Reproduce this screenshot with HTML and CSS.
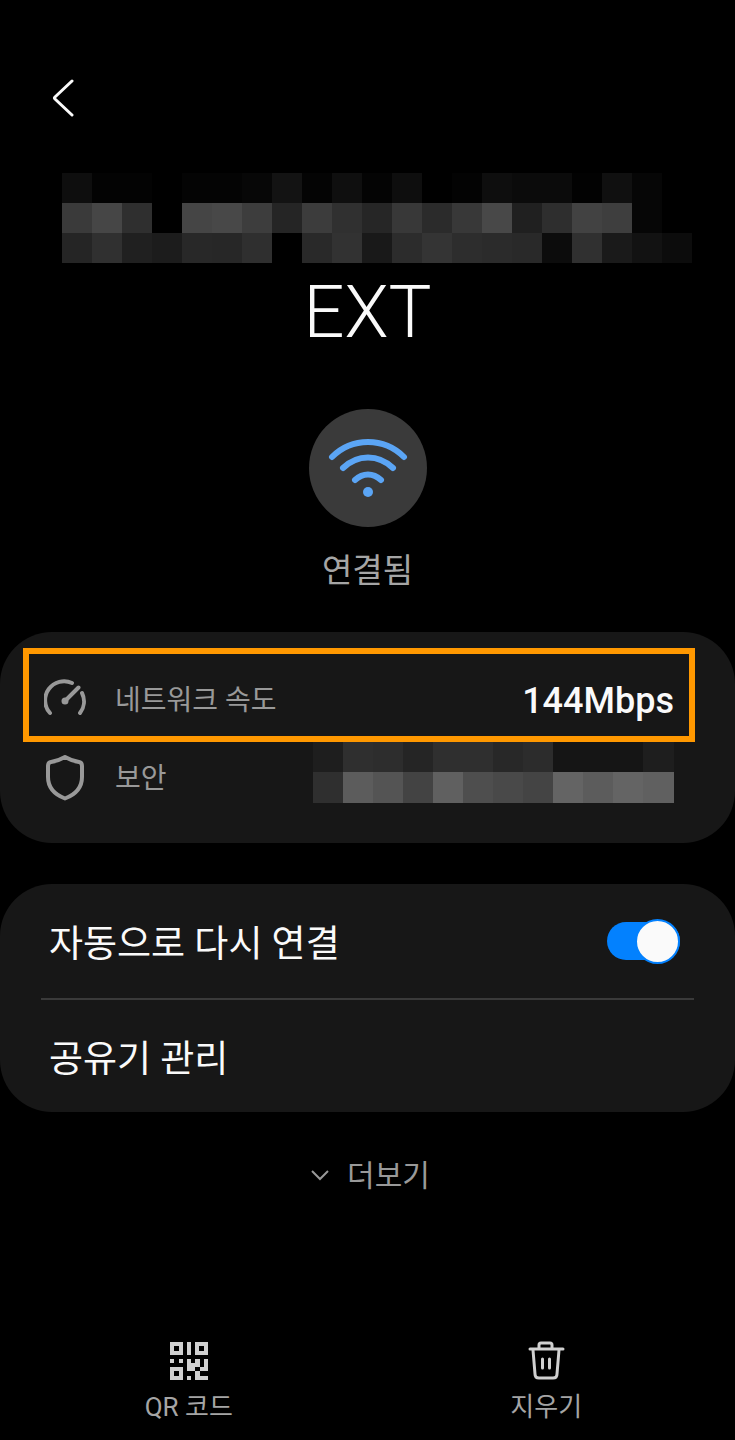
FILE: index.html
```html
<!DOCTYPE html>
<html lang="ko">
    <head>
        <meta charset="utf-8">
        <meta name="viewport" content="width=device-width, initial-scale=1">
        <title>EXT</title>
        <link rel="stylesheet" href="styles.css">
    </head>
    <body>
        <div class="page">
            <header class="topbar">
                <button class="back" type="button" aria-label="뒤로">
                    <svg width="24" height="42" viewBox="0 0 24 42"><path d="M20 4L3 20Q2 21 3 22L20 38"/></svg>
                </button>
            </header>
            <main>
                <section class="network">
                    <!-- Hidden part of the network name -->
                    <svg class="mosaic" viewBox="0 0 630 90" shape-rendering="crispEdges" aria-hidden="true">
                        <rect x="0" y="0" width="30" height="30" fill="#0e0e0e"/>
                        <rect x="30" y="0" width="60" height="30" fill="#030303"/>
                        <rect x="120" y="0" width="60" height="30" fill="#040404"/>
                        <rect x="180" y="0" width="30" height="30" fill="#070707"/>
                        <rect x="210" y="0" width="30" height="30" fill="#131313"/>
                        <rect x="240" y="0" width="30" height="30" fill="#040404"/>
                        <rect x="270" y="0" width="30" height="30" fill="#0f0f0f"/>
                        <rect x="300" y="0" width="30" height="30" fill="#040404"/>
                        <rect x="330" y="0" width="30" height="30" fill="#0e0e0e"/>
                        <rect x="390" y="0" width="30" height="30" fill="#030303"/>
                        <rect x="420" y="0" width="30" height="30" fill="#0e0e0e"/>
                        <rect x="450" y="0" width="60" height="30" fill="#0b0b0b"/>
                        <rect x="510" y="0" width="30" height="30" fill="#020202"/>
                        <rect x="540" y="0" width="30" height="30" fill="#101010"/>
                        <rect x="570" y="0" width="30" height="60" fill="#060606"/>
                        <rect x="0" y="30" width="30" height="30" fill="#3a3a3a"/>
                        <rect x="30" y="30" width="30" height="30" fill="#464646"/>
                        <rect x="60" y="30" width="30" height="30" fill="#2f2f2f"/>
                        <rect x="120" y="30" width="30" height="30" fill="#454545"/>
                        <rect x="150" y="30" width="30" height="30" fill="#484848"/>
                        <rect x="180" y="30" width="30" height="30" fill="#3d3d3d"/>
                        <rect x="210" y="30" width="30" height="30" fill="#252525"/>
                        <rect x="240" y="30" width="30" height="30" fill="#3c3c3c"/>
                        <rect x="270" y="30" width="30" height="30" fill="#303030"/>
                        <rect x="300" y="30" width="30" height="30" fill="#262626"/>
                        <rect x="330" y="30" width="30" height="30" fill="#383838"/>
                        <rect x="360" y="30" width="30" height="30" fill="#2b2b2b"/>
                        <rect x="390" y="30" width="30" height="30" fill="#383838"/>
                        <rect x="420" y="30" width="30" height="30" fill="#484848"/>
                        <rect x="450" y="30" width="30" height="30" fill="#202020"/>
                        <rect x="480" y="30" width="30" height="30" fill="#2e2e2e"/>
                        <rect x="510" y="30" width="30" height="30" fill="#424242"/>
                        <rect x="540" y="30" width="30" height="30" fill="#3e3e3e"/>
                        <rect x="0" y="60" width="30" height="30" fill="#252525"/>
                        <rect x="30" y="60" width="30" height="30" fill="#303030"/>
                        <rect x="60" y="60" width="30" height="30" fill="#202020"/>
                        <rect x="90" y="60" width="30" height="30" fill="#1c1c1c"/>
                        <rect x="120" y="60" width="30" height="30" fill="#282828"/>
                        <rect x="150" y="60" width="30" height="30" fill="#272727"/>
                        <rect x="180" y="60" width="30" height="30" fill="#2f2f2f"/>
                        <rect x="240" y="60" width="30" height="30" fill="#292929"/>
                        <rect x="270" y="60" width="30" height="30" fill="#323232"/>
                        <rect x="300" y="60" width="30" height="30" fill="#191919"/>
                        <rect x="330" y="60" width="30" height="30" fill="#2c2c2c"/>
                        <rect x="360" y="60" width="30" height="30" fill="#343434"/>
                        <rect x="390" y="60" width="30" height="30" fill="#2d2d2d"/>
                        <rect x="420" y="60" width="30" height="30" fill="#2b2b2b"/>
                        <rect x="450" y="60" width="30" height="30" fill="#292929"/>
                        <rect x="480" y="60" width="30" height="30" fill="#0c0c0c"/>
                        <rect x="510" y="60" width="30" height="30" fill="#303030"/>
                        <rect x="540" y="60" width="30" height="30" fill="#1a1a1a"/>
                        <rect x="570" y="60" width="30" height="30" fill="#121212"/>
                        <rect x="600" y="60" width="30" height="30" fill="#0c0c0c"/>
                    </svg>
                    <h1 class="network-name">EXT</h1>
                    <div class="signal">
                        <svg width="80" height="60" viewBox="0 0 80 60">
                            <path d="M4 19Q19 4 40 4T76 19"/>
                            <path d="M15 30Q26 19.500 40 19.500T65 30"/>
                            <path d="M27 42Q33 36.500 40 36.500T53 42"/>
                            <circle cx="40" cy="54" r="5"/>
                        </svg>
                    </div>
                    <p class="status">연결됨</p>
                </section>

                <section class="card card-info">
                    <div class="info info-highlight">
                        <svg class="info-icon" width="44" height="48" viewBox="0 0 44 48">
                            <path d="M6 36A19 19 0 0 1 28 6M38 16A19 19 0 0 1 36 36M21 24L34.500 10.500"/>
                            <circle cx="21" cy="24" r="3.500"/>
                        </svg>
                        <span class="info-label">네트워크 속도</span>
                        <strong class="info-value">144Mbps</strong>
                    </div>
                    <div class="info info-security">
                        <svg class="info-icon" width="44" height="48" viewBox="0 0 44 48">
                            <path d="M21 2Q28 6 35 7Q38 7.500 38 11V22Q38 37 21 43.500Q4 37 4 22V11Q4 7.500 7 7Q14 6 21 2Z"/>
                        </svg>
                        <span class="info-label">보안</span>
                        <svg class="info-mosaic" width="361" height="61" viewBox="0 0 361 61" shape-rendering="crispEdges" aria-hidden="true">
                            <rect x="0" y="0" width="30" height="30" fill="#1e1e1e"/>
                            <rect x="30" y="0" width="30" height="30" fill="#2f2f2f"/>
                            <rect x="60" y="0" width="30" height="30" fill="#2d2d2d"/>
                            <rect x="90" y="0" width="30" height="30" fill="#252525"/>
                            <rect x="120" y="0" width="60" height="30" fill="#2f2f2f"/>
                            <rect x="180" y="0" width="30" height="30" fill="#282828"/>
                            <rect x="210" y="0" width="30" height="30" fill="#2c2c2c"/>
                            <rect x="240" y="0" width="90" height="30" fill="#151515"/>
                            <rect x="330" y="0" width="31" height="30" fill="#1e1e1e"/>
                            <rect x="0" y="30" width="30" height="31" fill="#2f2f2f"/>
                            <rect x="30" y="30" width="30" height="31" fill="#5c5c5c"/>
                            <rect x="60" y="30" width="30" height="31" fill="#545454"/>
                            <rect x="90" y="30" width="30" height="31" fill="#434343"/>
                            <rect x="120" y="30" width="30" height="31" fill="#606060"/>
                            <rect x="150" y="30" width="30" height="31" fill="#4e4e4e"/>
                            <rect x="180" y="30" width="30" height="31" fill="#494949"/>
                            <rect x="210" y="30" width="30" height="31" fill="#444444"/>
                            <rect x="240" y="30" width="30" height="31" fill="#646464"/>
                            <rect x="270" y="30" width="30" height="31" fill="#5c5c5c"/>
                            <rect x="300" y="30" width="30" height="31" fill="#646464"/>
                            <rect x="330" y="30" width="31" height="31" fill="#606060"/>
                        </svg>
                    </div>
                </section>

                <section class="card card-settings">
                    <div class="setting">
                        <label class="setting-label" for="auto-reconnect">자동으로 다시 연결</label>
                        <input class="switch" id="auto-reconnect" type="checkbox" role="switch" checked>
                    </div>
                    <button class="setting setting-link" type="button">
                        <span class="setting-label">공유기 관리</span>
                    </button>
                </section>

                <button class="more" type="button">
                    <svg width="18" height="12" viewBox="0 0 18 12"><path d="M1 1L9 9L17 1"/></svg>
                    더보기
                </button>
            </main>
            <footer class="actions">
                <button class="action" type="button">
                    <svg width="38" height="38" viewBox="0 0 38 38" shape-rendering="crispEdges">
                        <path fill-rule="evenodd" d="M0 0H13V13H0ZM4 4V9H9V4ZM25 0H38V13H25ZM29 4V9H34V4ZM0 25H13V38H0ZM4 29V34H9V29Z"/>
                        <path d="M17 0H21V13H17ZM0 17H4V21H0ZM9 17H13V21H9ZM17 17H21V21H25V17H30V25H25V29H17ZM34 17H38V29H30V25H34ZM17 34H21V38H17ZM25 29H30V34H38V38H25Z"/>
                    </svg>
                    QR 코드
                </button>
                <button class="action action-delete" type="button">
                    <svg width="38" height="39" viewBox="0 0 38 39">
                        <path d="M3 8H36M12 7V4Q12 2 14 2H23Q25 2 25 4V7M6 9L8 33Q8 37 12 37H26Q30 37 30 33L32 9M15.500 18V27M22.500 18V27"/>
                    </svg>
                    지우기
                </button>
            </footer>
        </div>
    </body>
</html>
```
FILE: styles.css
```css
/* Overall */

*, *::before {
    box-sizing: border-box;
}

html, body {
    padding: 0;
    margin: 0;
}

body {
    background: #000;
    color: #FAFAFA;
    font-family: Roboto, 'Noto Sans CJK KR', sans-serif;
    font-size: 28px;
    line-height: 40px;
}

h1, p {
    margin: 0;
}

button {
    background: none;
    border: 0;
    padding: 0;
    color: inherit;
    font: inherit;
    cursor: pointer;
}

svg {
    display: block;
    flex: none;
}

.page {
    display: flex;
    flex-direction: column;
    min-height: 100vh;
}

/* Top bar */

.topbar {
    padding: 72px 40px 49px;
}

.back {
    display: block;
    padding: 5px 12px;
}

.back svg {
    fill: none;
    stroke: #FAFAFA;
    stroke-width: 3;
    stroke-linecap: round;
}

/* Network */

.network {
    display: flex;
    flex-direction: column;
    align-items: center;
}

.mosaic {
    align-self: stretch;
    margin: 0 43px 0 62px;
}

.network-name {
    font-size: 72px;
    font-weight: 300;
    line-height: 100px;
}

.signal {
    display: flex;
    align-items: center;
    justify-content: center;
    width: 118px;
    height: 118px;
    margin-top: 46px;
    background: #3A3A3A;
    border-radius: 50%;
}

.signal svg {
    fill: none;
    stroke: #5BA5F5;
    stroke-width: 6;
    stroke-linecap: round;
}

.signal circle {
    fill: #5BA5F5;
    stroke: none;
}

.status {
    margin: 24px 0 41px;
    color: #A5A5A5;
    font-size: 33px;
}

/* Cards */

.card {
    background: #171717;
    border-radius: 52px;
}

.card-info {
    padding: 16px 40px 40px 23px;
}

.info {
    display: flex;
    align-items: center;
    padding: 0 21px;
    color: #999;
}

.info-highlight {
    height: 94px;
    padding: 12px 15px 0;
    border: 6px solid #FF9800;
}

.info-security {
    align-items: flex-end;
}

.info-icon {
    fill: none;
    stroke: #999;
    stroke-width: 4;
    stroke-linecap: round;
    stroke-linejoin: round;
}

.info-icon circle {
    fill: #999;
    stroke: none;
}

.info-label {
    margin-left: 27px;
    line-height: 48px;
}

.info-value {
    margin-left: auto;
    color: #FAFAFA;
    font-size: 36px;
    font-weight: 500;
}

.info-mosaic {
    margin-left: auto;
}

.card-settings {
    margin-top: 41px;
    padding: 0 41px;
}

.setting {
    display: flex;
    align-items: center;
    justify-content: space-between;
    width: 100%;
    height: 114px;
    padding: 0 14px 0 8px;
    font-size: 37px;
}

.setting-label {
    padding-top: 8px;
}

.setting-link {
    border-top: 2px solid #3A3A3A;
}

.switch {
    appearance: none;
    display: flex;
    align-items: center;
    width: 73px;
    height: 38px;
    margin: 0;
    background: #0381FE;
    border-radius: 19px;
    cursor: pointer;
}

.switch::before {
    content: '';
    flex: none;
    width: 45px;
    height: 45px;
    background: #FAFAFA;
    border: 2px solid #0381FE;
    border-radius: 50%;
}

.switch:checked {
    justify-content: flex-end;
}

.switch:not(:checked) {
    background: #555;
}

.more {
    display: flex;
    align-items: center;
    gap: 18px;
    margin: 44px auto;
    padding-left: 6px;
    color: #999;
    font-size: 30px;
}

.more svg {
    fill: none;
    stroke: #999;
    stroke-width: 2;
}

/* Bottom actions */

.actions {
    display: flex;
    margin-top: auto;
    padding: 0 10px 13px;
}

.action {
    display: flex;
    flex: 1;
    flex-direction: column;
    align-items: center;
    justify-content: flex-end;
    gap: 7px;
    color: #A5A5A5;
    font-size: 26px;
}

.action svg {
    fill: #D0D0D0;
}

.action-delete svg {
    fill: none;
    stroke: #D0D0D0;
    stroke-width: 3;
    stroke-linecap: round;
}
```
